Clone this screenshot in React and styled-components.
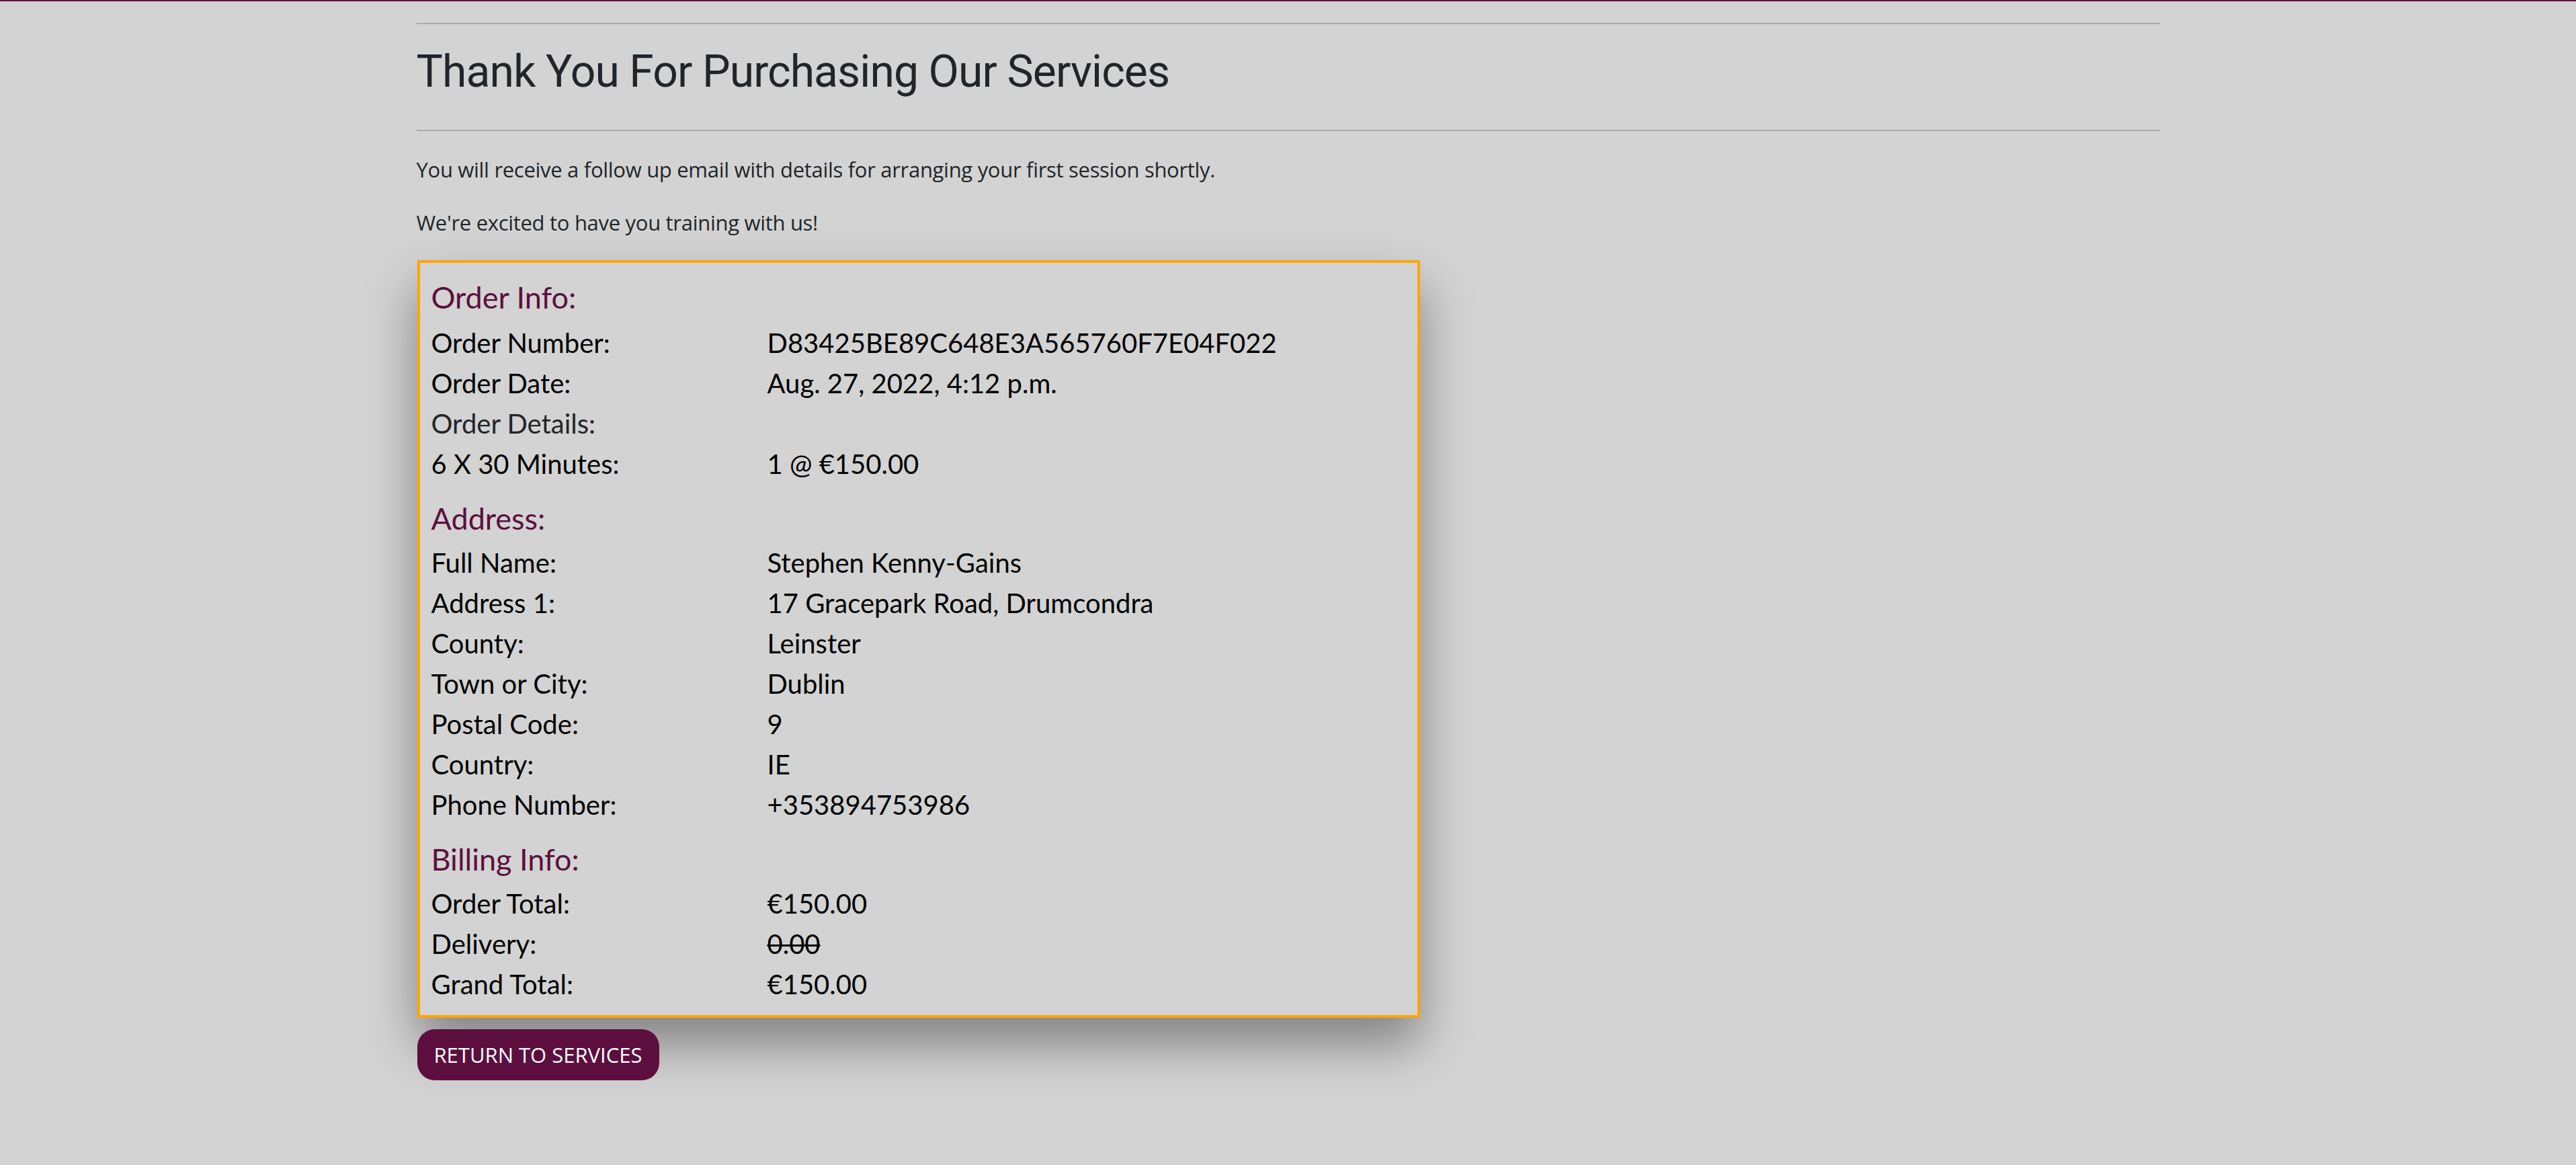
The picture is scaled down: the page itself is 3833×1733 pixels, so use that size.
import React from "react";
import styled, { createGlobalStyle } from "styled-components";

const PURPLE = "#5c0f3e";

const GlobalStyle = createGlobalStyle`
  html, body {
    margin: 0;
    padding: 0;
    background: #d3d3d3;
  }
  body {
    font-family: "Open Sans", "Liberation Sans", sans-serif;
    color: #212529;
  }
`;

const TopBar = styled.div`
  height: 2px;
  background: ${PURPLE};
`;

const Container = styled.main`
  width: 2594px;
  margin: 0 auto;
  padding-bottom: 80px;
`;

const Rule = styled.hr`
  border: 0;
  border-top: 2px solid #aaaaaa;
  margin: ${(p) => p.$top}px 0 0;
  height: 0;
`;

const Title = styled.h2`
  font-family: Roboto, "Liberation Sans", sans-serif;
  font-weight: 400;
  font-size: 66px;
  line-height: 80px;
  letter-spacing: -0.9px;
  color: #212529;
  margin: 31px 0 46px;
`;

const Lead = styled.p`
  font-family: "Open Sans", "Liberation Sans", sans-serif;
  font-size: 31px;
  line-height: 40px;
  color: #212529;
  margin: ${(p) => p.$top}px 0 0;
  letter-spacing: -0.3px;
`;

const Card = styled.section`
  box-sizing: border-box;
  width: 1492px;
  margin-top: 36px;
  margin-left: 1px;
  border: 4px solid #ffa500;
  padding: 0 16px 16px 17px;
  box-shadow: 0 40px 70px rgba(0, 0, 0, 0.38);
  font-family: Lato, "Liberation Sans", sans-serif;
`;

const SectionTitle = styled.h4`
  font-family: Lato, "Liberation Sans", sans-serif;
  font-weight: 400;
  font-size: 45px;
  line-height: 54px;
  color: ${PURPLE};
  margin: 24px 0 ${(p) => (p.$first ? 11 : 9)}px;
`;

const Row = styled.div`
  display: grid;
  grid-template-columns: 500px 1fr;
  font-size: 40px;
  line-height: 60px;
  color: #000;
`;

const Label = styled.span`
  color: ${(p) => (p.$muted ? "#212529" : "#000")};
`;

const Value = styled.span`
  text-decoration: ${(p) => (p.$struck ? "line-through" : "none")};
  text-decoration-thickness: 3px;
`;

const ReturnButton = styled.a`
  display: inline-flex;
  align-items: center;
  justify-content: center;
  box-sizing: border-box;
  margin-top: 17px;
  margin-left: 1px;
  width: 360px;
  height: 76px;
  border-radius: 26px;
  background: ${PURPLE};
  color: #fff;
  font-family: "Open Sans", "Liberation Sans", sans-serif;
  font-size: 31px;
  text-decoration: none;
  cursor: pointer;
`;

const sections = [
  {
    title: "Order Info:",
    rows: [
      ["Order Number:", "D83425BE89C648E3A565760F7E04F022"],
      ["Order Date:", "Aug. 27, 2022, 4:12 p.m."],
      ["Order Details:", "", { muted: true }],
      ["6 X 30 Minutes:", "1 @ €150.00"],
    ],
  },
  {
    title: "Address:",
    rows: [
      ["Full Name:", "Stephen Kenny-Gains"],
      ["Address 1:", "17 Gracepark Road, Drumcondra"],
      ["County:", "Leinster"],
      ["Town or City:", "Dublin"],
      ["Postal Code:", "9"],
      ["Country:", "IE"],
      ["Phone Number:", "+353894753986"],
    ],
  },
  {
    title: "Billing Info:",
    rows: [
      ["Order Total:", "€150.00"],
      ["Delivery:", "0.00", { struck: true }],
      ["Grand Total:", "€150.00"],
    ],
  },
];

export default function App() {
  return (
    <>
      <GlobalStyle />
      <TopBar />
      <Container>
        <Rule $top={32} />
        <Title>Thank You For Purchasing Our Services</Title>
        <Rule $top={0} />
        <Lead $top={37}>
          You will receive a follow up email with details for arranging your first session shortly.
        </Lead>
        <Lead $top={39}>We're excited to have you training with us!</Lead>
        <Card>
          {sections.map((s, i) => (
            <React.Fragment key={s.title}>
              <SectionTitle $first={i === 0}>{s.title}</SectionTitle>
              {s.rows.map(([label, value, opts = {}]) => (
                <Row key={label}>
                  <Label $muted={opts.muted}>{label}</Label>
                  <Value $struck={opts.struck}>{value}</Value>
                </Row>
              ))}
            </React.Fragment>
          ))}
        </Card>
        <ReturnButton>RETURN TO SERVICES</ReturnButton>
      </Container>
    </>
  );
}
